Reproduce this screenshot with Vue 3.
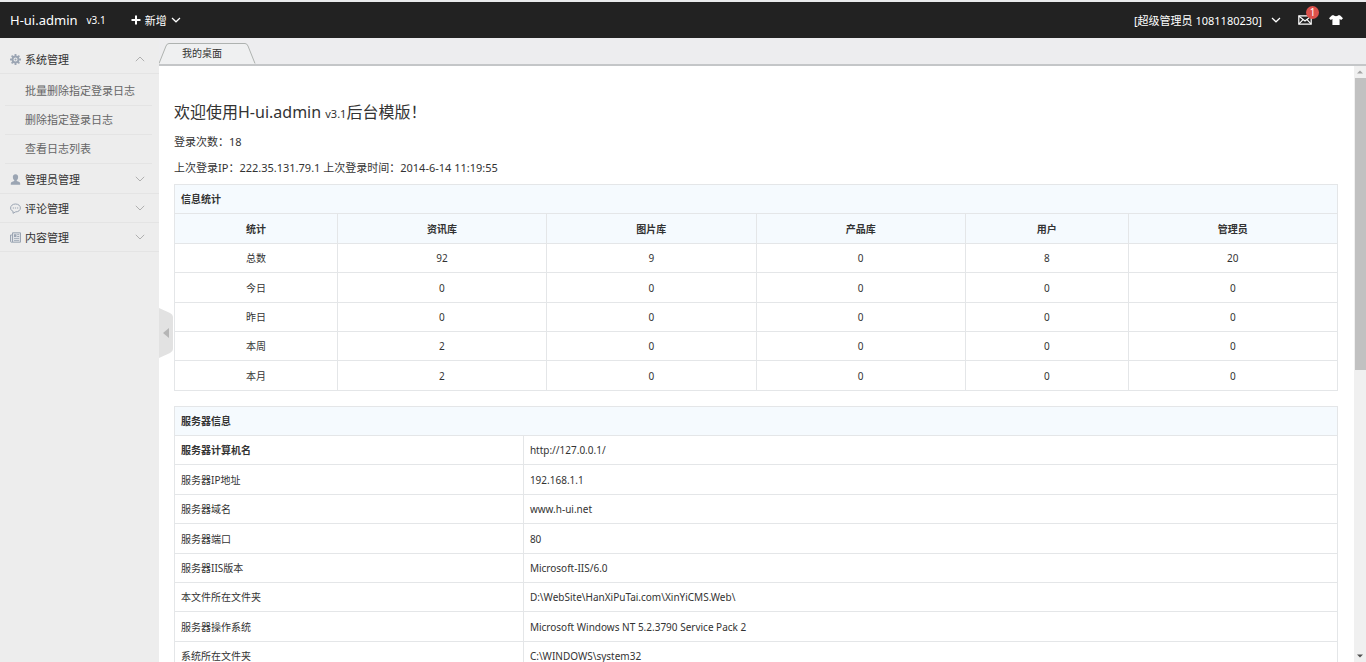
<script setup>
const groups = [
  { name: '系统管理', icon: 'gear', open: true, items: ['批量删除指定登录日志', '删除指定登录日志', '查看日志列表'] },
  { name: '管理员管理', icon: 'user', open: false, items: [] },
  { name: '评论管理', icon: 'comment', open: false, items: [] },
  { name: '内容管理', icon: 'news', open: false, items: [] }
]
const teeth = [0, 45, 90, 135, 180, 225, 270, 315]
const columns = ['统计', '资讯库', '图片库', '产品库', '用户', '管理员']
const stats = [
  ['总数', 92, 9, 0, 8, 20],
  ['今日', 0, 0, 0, 0, 0],
  ['昨日', 0, 0, 0, 0, 0],
  ['本周', 2, 0, 0, 0, 0],
  ['本月', 2, 0, 0, 0, 0]
]
const server = [
  ['服务器计算机名', 'http://127.0.0.1/'],
  ['服务器IP地址', '192.168.1.1'],
  ['服务器域名', 'www.h-ui.net'],
  ['服务器端口', '80'],
  ['服务器IIS版本', 'Microsoft-IIS/6.0'],
  ['本文件所在文件夹', 'D:\\WebSite\\HanXiPuTai.com\\XinYiCMS.Web\\'],
  ['服务器操作系统', 'Microsoft Windows NT 5.2.3790 Service Pack 2'],
  ['系统所在文件夹', 'C:\\WINDOWS\\system32']
]
</script>

<template>
  <div class="admin">
    <header class="topbar">
      <a class="logo" href="#">H-ui.admin</a>
      <span class="version">v3.1</span>
      <button class="add" type="button">
        <svg width="10" height="10" viewBox="0 0 10 10"><path d="M5 0.5V9.5M0.5 5H9.5" stroke="#fff" stroke-width="2" fill="none" /></svg>
        <span>新增</span>
        <svg width="10" height="6" viewBox="0 0 10 6"><path d="M1 1L5 4.8L9 1" stroke="#fff" stroke-width="1.2" fill="none" /></svg>
      </button>
      <nav class="user">
        <button class="account" type="button">
          <span>[超级管理员 1081180230]</span>
          <svg width="10" height="6" viewBox="0 0 10 6"><path d="M1 1L5 4.8L9 1" stroke="#fff" stroke-width="1.2" fill="none" /></svg>
        </button>
        <a class="mail" href="#" aria-label="消息">
          <svg width="14" height="10" viewBox="0 0 14 10" fill="none" stroke="#fff" stroke-width="1.2"><path d="M0.8 0.8H13.2V9.2H0.8Z" /><path d="M1 1.2L7 6L13 1.2M1 8.8L5 4.6M13 8.8L9 4.6" /></svg>
          <span class="badge">1</span>
        </a>
        <a class="skin" href="#" aria-label="换肤">
          <svg width="14" height="10" viewBox="0 0 14 10"><path d="M4.3 0C5 1.5 9 1.5 9.7 0L11.2 0.4L14 3.2L12.2 5L10.6 4V10H3.4V4L1.8 5L0 3.2L2.8 0.4Z" fill="#fff" /></svg>
        </a>
      </nav>
    </header>

    <div class="body">
      <aside class="sidebar">
        <section v-for="g in groups" :key="g.name">
          <button class="group" type="button" :aria-expanded="g.open">
            <svg v-if="g.icon === 'gear'" width="11" height="11" viewBox="0 0 11 11">
              <circle cx="5.5" cy="5.5" r="3" fill="none" stroke="#9ba5b3" stroke-width="2" />
              <path v-for="t in teeth" :key="t" d="M4.5 0H6.5L6.2 2.4H4.8Z" fill="#9ba5b3" :transform="`rotate(${t} 5.5 5.5)`" />
              <circle cx="5.5" cy="5.5" r="1" fill="#9ba5b3" />
            </svg>
            <svg v-else-if="g.icon === 'user'" width="11" height="11" viewBox="0 0 11 11">
              <path d="M5.5 0.3C7.4 0.3 8.3 1.6 8.1 3.4C8 4.8 7.4 5.6 6.8 6.1V7C8.6 7.5 10.2 8 10.2 9.6V10.8H0.8V9.6C0.8 8 2.4 7.5 4.2 7V6.1C3.6 5.6 3 4.8 2.9 3.4C2.7 1.6 3.6 0.3 5.5 0.3Z" fill="#9ba5b3" />
            </svg>
            <svg v-else-if="g.icon === 'comment'" width="11" height="11" viewBox="0 0 11 11">
              <path d="M5.5 1C8.3 1 10.4 2.7 10.4 5C10.4 7.3 8.3 8.9 5.5 8.9L3 10.3L3.1 8.4C1.5 7.8 0.6 6.5 0.6 5C0.6 2.7 2.7 1 5.5 1Z" fill="none" stroke="#9ba5b3" />
              <path d="M2.8 4.4H4V5.6H2.8ZM4.9 4.4H6.1V5.6H4.9ZM7 4.4H8.2V5.6H7Z" fill="#9ba5b3" />
            </svg>
            <svg v-else width="11" height="11" viewBox="0 0 11 11">
              <path d="M2.5 0.8H10.5V10.2H1.2C0.8 10.2 0.5 9.8 0.5 9.4V3H2.5ZM2.5 3V10" fill="#dfe2e6" stroke="#9ba5b3" />
              <path d="M4 2.3H6.4V5H4ZM7.2 2.3H9.2V3.1H7.2ZM7.2 4.1H9.2V4.9H7.2ZM4 6.2H9.2V7H4ZM4 8H9.2V8.8H4Z" fill="#9ba5b3" />
            </svg>
            <span>{{ g.name }}</span>
            <svg class="arrow" :class="{ up: g.open }" width="10" height="6" viewBox="0 0 10 6"><path d="M0.8 0.8L5 5L9.2 0.8" stroke="#b0b0b0" fill="none" /></svg>
          </button>
          <ul v-if="g.open" class="items">
            <li v-for="i in g.items" :key="i"><a href="#">{{ i }}</a></li>
          </ul>
        </section>
      </aside>

      <main class="main">
        <button class="collapse" type="button" aria-label="收起菜单">
          <svg width="14" height="50" viewBox="0 0 14 50"><path d="M0 0L11 5Q14 6.5 14 9V41Q14 43.5 11 45L0 50Z" fill="#e2e2e2" /><path d="M10 20V30L4 25Z" fill="#b5b5b5" /></svg>
        </button>
        <div class="tabs">
          <a class="tab" href="#">
            <svg class="tab-shape" width="98" height="22" viewBox="0 0 98 22"><path d="M0 22L7 4Q8 1.5 10 1.5H86Q88 1.5 89 4L96 22Z" fill="#eff0f1" /><path d="M0 21.5L7 4Q8 1.5 10 1.5H86Q88 1.5 89 4L96 21.5" fill="none" stroke="#aeb2b0" /></svg>
            <span>我的桌面</span>
          </a>
        </div>
        <div class="view">
          <div class="content">
            <h1>欢迎使用H-ui.admin <small>v3.1</small>后台模版！</h1>
            <p>登录次数：18</p>
            <p>上次登录IP：222.35.131.79.1 上次登录时间：2014-6-14 11:19:55</p>

            <table class="stats">
              <colgroup><col class="narrow"><col><col><col><col class="narrow"><col></colgroup>
              <thead>
                <tr><th class="caption" colspan="6" scope="colgroup">信息统计</th></tr>
                <tr><th v-for="c in columns" :key="c" scope="col">{{ c }}</th></tr>
              </thead>
              <tbody>
                <tr v-for="row in stats" :key="row[0]"><td v-for="(v, n) in row" :key="n">{{ v }}</td></tr>
              </tbody>
            </table>

            <table class="server">
              <colgroup><col class="label"><col></colgroup>
              <thead>
                <tr><th colspan="2" scope="colgroup">服务器信息</th></tr>
              </thead>
              <tbody>
                <tr v-for="(row, n) in server" :key="row[0]">
                  <component :is="n ? 'td' : 'th'">{{ row[0] }}</component>
                  <td>{{ row[1] }}</td>
                </tr>
              </tbody>
            </table>
          </div>
          <div class="scrollbar">
            <svg width="12" height="12" viewBox="0 0 12 12"><path d="M3 7.5L6 4.5L9 7.5Z" fill="#a3a3a3" /></svg>
            <div class="track"><div class="thumb"></div></div>
            <svg width="12" height="12" viewBox="0 0 12 12"><path d="M3 4.5L6 7.5L9 4.5Z" fill="#505050" /></svg>
          </div>
        </div>
      </main>
    </div>
  </div>
</template>

<style>
body { margin: 0; overflow: hidden; }
</style>

<style scoped>
* { box-sizing: border-box; }
.admin {
  display: flex;
  flex-direction: column;
  height: 100vh;
  overflow: hidden;
  font-family: "Noto Sans", "Noto Sans CJK SC", sans-serif;
  font-size: 11px;
  color: #333;
  background: #fff;
}
button { font: inherit; border: 0; padding: 0; background: none; color: inherit; }
a { color: inherit; text-decoration: none; }
svg { display: block; flex: none; }
.topbar {
  flex: none;
  display: flex;
  align-items: center;
  height: 38px;
  padding: 0 23px 0 10px;
  color: #fff;
  background: #222;
  border-top: 2px solid #e9eaec;
}
.logo { font-size: 13px; }
.version { margin-left: 9px; font-size: 10px; }
.add { display: flex; align-items: center; gap: 4px; margin-left: 25px; }
.user { display: flex; align-items: center; margin-left: auto; }
.account { display: flex; align-items: center; gap: 9px; }
.mail { position: relative; margin-left: 17px; }
.badge {
  position: absolute;
  left: 8px;
  top: -9px;
  width: 13px;
  height: 13px;
  border-radius: 50%;
  background: #dd514c;
  font-size: 10px;
  line-height: 13px;
  text-align: center;
}
.skin { margin-left: 17px; }
.body { flex: 1; display: flex; min-height: 0; }
.sidebar { flex: none; width: 159px; padding-top: 7px; background: #ededed; }
.group {
  display: flex;
  align-items: center;
  gap: 4px;
  width: 100%;
  height: 29px;
  padding: 0 14px 0 10px;
  border-bottom: 1px solid #e4e4e4;
}
.arrow { margin-left: auto; }
.up { transform: rotate(180deg); }
.items { list-style: none; margin: 0; padding: 3px 7px 1px 5px; color: #666; }
.items li { height: 29px; padding-left: 20px; line-height: 28px; border-bottom: 1px solid #e4e4e4; }
.main { position: relative; flex: 1; display: flex; flex-direction: column; min-width: 0; }
.collapse { position: absolute; left: 0; top: 270px; }
.tabs {
  flex: none;
  display: flex;
  align-items: flex-end;
  height: 28px;
  background: #ededef;
  border-bottom: 2px solid #c4c6c8;
}
.tab { position: relative; width: 98px; height: 22px; padding-left: 23px; font-size: 10px; line-height: 22px; }
.tab-shape { position: absolute; left: 0; top: 0; }
.tab span { position: relative; }
.view { flex: 1; display: flex; min-height: 0; }
.content { flex: 1; min-width: 0; padding: 33px 16px 0 15px; overflow: hidden; }
h1 { margin: 0 0 5px; font-size: 16px; line-height: 26px; font-weight: 400; }
small { font-size: 11px; }
p { margin: 0 0 6px; line-height: 20px; }
table {
  width: 100%;
  margin: 0 0 15px;
  table-layout: fixed;
  border-collapse: separate;
  border-spacing: 0;
  border: 1px solid #e4e6e8;
  border-width: 1px 0 0 1px;
  font-size: 10px;
  line-height: 16px;
}
th, td { height: 29px; padding: 0 6px; border: 1px solid #e4e6e8; border-width: 0 1px 1px 0; text-align: left; }
thead th { background: #f5fafe; }
.stats th, .stats td { text-align: center; }
.stats .caption { text-align: left; }
.stats thead tr:nth-child(2) th,
.stats tbody tr:nth-child(5n+2) td,
.stats tbody tr:nth-child(5n) td { height: 30px; }
.server tbody tr:nth-child(5n+2) > *,
.server tbody tr:nth-child(5n+4) > * { height: 30px; }
.narrow { width: 14%; }
.label { width: 30%; }
.scrollbar { flex: none; display: flex; flex-direction: column; width: 12px; background: #f0f0f0; }
.track { flex: 1; padding-left: 1px; }
.thumb { height: 51%; background: #c1c1c1; }
</style>
